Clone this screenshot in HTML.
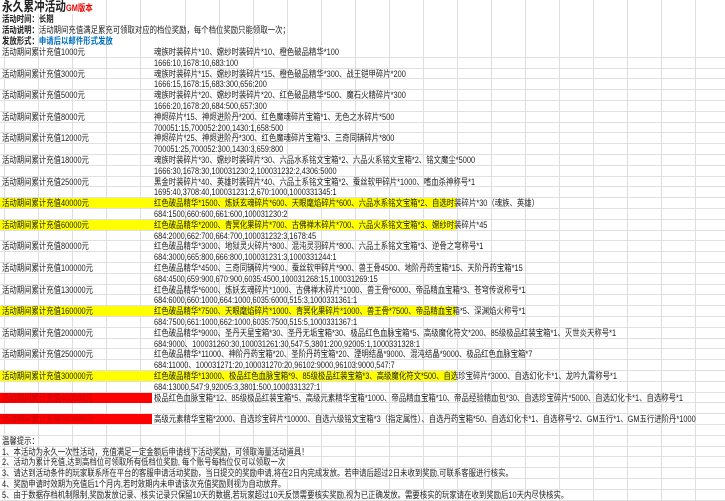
<!DOCTYPE html>
<html><head><meta charset="utf-8"><style>
*{margin:0;padding:0;box-sizing:border-box}
body{width:725px;height:500px;overflow:hidden;background:#fff;position:relative;font-family:"Liberation Sans","Noto Sans CJK SC",sans-serif;font-size:9px;color:#222}
#grid{position:absolute;left:0;top:0;width:725px;height:500px;
background-image:repeating-linear-gradient(90deg,transparent 0,transparent 33px,#dedede 33px,#dedede 34px);background-position:152px 0}
.r{position:absolute;left:0;width:725px;height:10.8px;border-bottom:1px solid #e0e0e0;white-space:nowrap;line-height:10px}
.y::before{content:"";position:absolute;left:0;top:0;width:456px;height:10px;background:#ffff00}
.rd::before{content:"";position:absolute;left:0;top:0;width:152px;height:10px;background:#ff0000}
.l{position:absolute;left:2px;top:0;height:10px;transform:scaleX(0.82);transform-origin:0 0}
.c{position:absolute;left:154px;top:0;height:10px;transform:scaleX(0.82);transform-origin:0 0}
.rd .l{color:#c00000}
.h{position:absolute;left:2px;white-space:nowrap;font-weight:bold;transform:scaleX(0.82);transform-origin:0 0}
</style></head><body>
<div id="grid"></div>
<div style="position:absolute;left:0;top:0;width:95px;height:14px;background:#fff"></div>
<div class="h" style="top:0;font-size:13px;line-height:14px">永久累冲活动<span style="color:#e00;font-size:9px">GM版本</span></div>
<div class="h" style="top:14px;line-height:11px">活动时间：长期</div>
<div class="h" style="top:25px;line-height:11px">活动说明：<span style="font-weight:normal">活动期间充值满足累充可领取对应的档位奖励，每个档位奖励只能领取一次；</span></div>
<div class="h" style="top:36px;line-height:11px">发放形式：<span style="color:#0070c0">申请后以邮件形式发放</span></div>

<div class="r" style="top:47px"><div class="l">活动期间累计充值1000元</div><div class="c">魂族时装碎片*10、嫦纱时装碎片*10、橙色破品精华*100</div></div>
<div class="r" style="top:57.8px"><div class="c">1666:10,1678:10,683:100</div></div>
<div class="r" style="top:68.6px"><div class="l">活动期间累计充值3000元</div><div class="c">魂族时装碎片*15、嫦纱时装碎片*15、橙色破品精华*300、战王铠甲碎片*200</div></div>
<div class="r" style="top:79.4px"><div class="c">1666:15,1678:15,683:300,656:200</div></div>
<div class="r" style="top:90.2px"><div class="l">活动期间累计充值5000元</div><div class="c">魂族时装碎片*20、嫦纱时装碎片*20、红色破品精华*500、魔石火精碎片*300</div></div>
<div class="r" style="top:101px"><div class="c">1666:20,1678:20,684:500,657:300</div></div>
<div class="r" style="top:111.8px"><div class="l">活动期间累计充值8000元</div><div class="c">神烬碎片*15、神烬进阶丹*200、红色魔魂碎片宝箱*1、无色之水碎片*500</div></div>
<div class="r" style="top:122.6px"><div class="c">700051:15,700052:200,1430:1,658:500</div></div>
<div class="r" style="top:133.4px"><div class="l">活动期间累计充值12000元</div><div class="c">神烬碎片*25、神烬进阶丹*300、红色魔魂碎片宝箱*3、三奇同辆碎片*800</div></div>
<div class="r" style="top:144.2px"><div class="c">700051:25,700052:300,1430:3,659:800</div></div>
<div class="r" style="top:155px"><div class="l">活动期间累计充值18000元</div><div class="c">魂族时装碎片*30、嫦纱时装碎片*30、六品水系铭文宝箱*2、六品火系铭文宝箱*2、铭文魔尘*5000</div></div>
<div class="r" style="top:165.8px"><div class="c">1666:30,1678:30,100031230:2,100031232:2,4306:5000</div></div>
<div class="r" style="top:176.6px"><div class="l">活动期间累计充值25000元</div><div class="c">黑金时装碎片*40、英雄时装碎片*40、六品土系铭文宝箱*2、蚕丝软甲碎片*1000、嗜血杀神称号*1</div></div>
<div class="r" style="top:187.4px"><div class="c">1695:40,3708:40,100031231:2,670:1000,1000331345:1</div></div>
<div class="r y" style="top:198.2px"><div class="l">活动期间累计充值40000元</div><div class="c">红色破品精华*1500、炼妖玄魂碎片*600、天眼麾焰碎片*600、六品水系铭文宝箱*2、自选时装碎片*30（魂族、英雄）</div></div>
<div class="r" style="top:209px"><div class="c">684:1500,660:600,661:600,100031230:2</div></div>
<div class="r y" style="top:219.8px"><div class="l">活动期间累计充值60000元</div><div class="c">红色破品精华*2000、青冥化果碎片*700、古佛禅木碎片*700、六品火系铭文宝箱*3、嫦纱时装碎片*45</div></div>
<div class="r" style="top:230.6px"><div class="c">684:2000,662:700,664:700,100031232:3,1678:45</div></div>
<div class="r" style="top:241.4px"><div class="l">活动期间累计充值80000元</div><div class="c">红色破品精华*3000、地狱灵火碎片*800、混沌灵羽碎片*800、六品土系铭文宝箱*3、逆骨之穹称号*1</div></div>
<div class="r" style="top:252.2px"><div class="c">684:3000,665:800,666:800,100031231:3,1000331244:1</div></div>
<div class="r" style="top:263px"><div class="l">活动期间累计充值100000元</div><div class="c">红色破品精华*4500、三奇同辆碎片*900、蚕丝软甲碎片*900、兽王骨4500、地阶丹药宝箱*15、天阶丹药宝箱*15</div></div>
<div class="r" style="top:273.8px"><div class="c">684:4500,659:900,670:900,6035:4500,100031268:15,100031269:15</div></div>
<div class="r" style="top:284.6px"><div class="l">活动期间累计充值130000元</div><div class="c">红色破品精华*6000、炼妖玄魂碎片*1000、古佛禅木碎片*1000、兽王骨*6000、帝品精血宝箱*3、苍穹传说称号*1</div></div>
<div class="r" style="top:295.4px"><div class="c">684:6000,660:1000,664:1000,6035:6000,515:3,1000331361:1</div></div>
<div class="r y" style="top:306.2px"><div class="l">活动期间累计充值160000元</div><div class="c">红色破品精华*7500、天眼麾焰碎片*1000、青冥化果碎片*1000、兽王骨*7500、帝品精血宝箱*5、深渊焰火称号*1</div></div>
<div class="r" style="top:317px"><div class="c">684:7500,661:1000,662:1000,6035:7500,515:5,1000331367:1</div></div>
<div class="r" style="top:327.8px"><div class="l">活动期间累计充值200000元</div><div class="c">红色破品精华*9000、圣丹天星宝箱*30、圣丹无垢宝箱*30、极品红色血脉宝箱*5、高级魔化符文*200、85级极品红装宝箱*1、灭世炎天称号*1</div></div>
<div class="r" style="top:338.6px"><div class="c">684:9000、100031260:30,100031261:30,547:5,3801:200,92005:1,1000331328:1</div></div>
<div class="r" style="top:349.4px"><div class="l">活动期间累计充值250000元</div><div class="c">红色破品精华*11000、神阶丹药宝箱*20、圣阶丹药宝箱*20、湮明结晶*9000、混沌结晶*9000、极品红色血脉宝箱*7</div></div>
<div class="r" style="top:360.2px"><div class="c">684:11000、100031271:20,100031270:20,96102:9000,96103:9000,547:7</div></div>
<div class="r y" style="top:371px"><div class="l">活动期间累计充值300000元</div><div class="c">红色破品精华*13000、极品红色血脉宝箱*9、85级极品红装宝箱*3、高级魔化符文*500、自选珍宝碎片*3000、自选幻化卡*1、龙吟九霄称号*1</div></div>
<div class="r" style="top:381.8px"><div class="c">684:13000,547:9,92005:3,3801:500,1000331327:1</div></div>
<div class="r rd" style="top:392.6px"><div class="l">活动期间累计充值400000元</div><div class="c">极品红色血脉宝箱*12、85级极品红装宝箱*5、高级元素精华宝箱*1000、帝品精血宝箱*10、帝品经验精血包*30、自选珍宝碎片*5000、自选幻化卡*1、自选称号*1</div></div>
<div class="r" style="top:403.4px"></div>
<div class="r rd" style="top:414.2px"><div class="l">活动期间累计充值500000元</div><div class="c">高级元素精华宝箱*2000、自选珍宝碎片*10000、自选六级铭文宝箱*3（指定属性）、自选丹药宝箱*50、自选幻化卡*1、自选称号*2、GM五行*1、GM五行进阶丹*1000</div></div>
<div class="r" style="top:425px"></div>
<div class="r" style="top:435.8px"><div class="l">温馨提示：</div></div>
<div class="r" style="top:446.6px"><div class="l">1、本活动为永久一次性活动，充值满足一定金额后申请线下活动奖励，可领取海量活动道具！</div></div>
<div class="r" style="top:457.4px"><div class="l">2、活动为累计充值,达到高档位可领取所有低档位奖励, 每个账号每档位仅可以领取一次</div></div>
<div class="r" style="top:468.2px"><div class="l">3、请达到活动条件的玩家联系所在平台的客服申请活动奖励，当日提交的奖励申请,将在2日内完成发放。若申请后超过2日未收到奖励,可联系客服进行核实。</div></div>
<div class="r" style="top:479px"><div class="l">4、奖励申请时效期为充值后1个月内,若时效期内未申请该次充值奖励则视为自动放弃。</div></div>
<div class="r" style="top:489.8px"><div class="l">5、由于数据存档机制限制,奖励发放记录、核实记录只保留10天的数据,若玩家超过10天反馈需要核实奖励,视为已正确发放。需要核实的玩家请在收到奖励后10天内尽快核实。</div></div>
</body></html>
